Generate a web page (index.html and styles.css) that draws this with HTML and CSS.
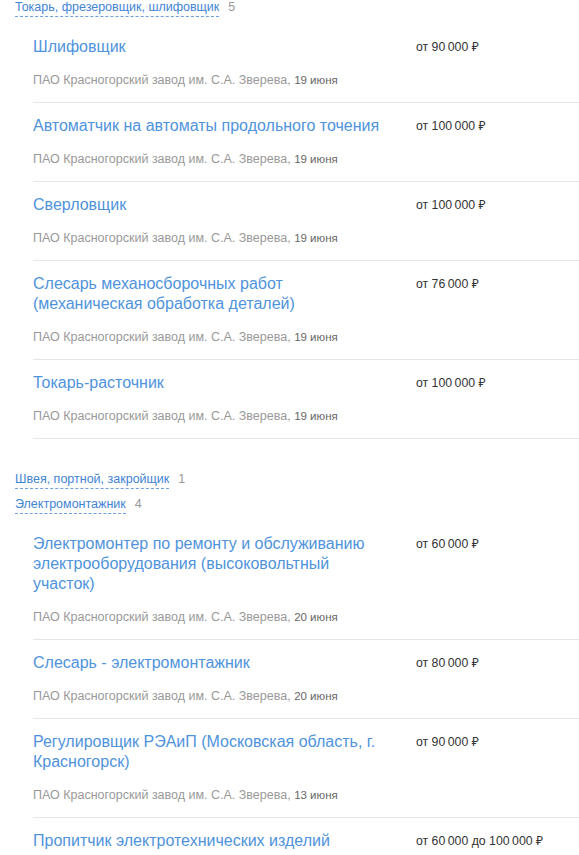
FILE: index.html
```html
<!DOCTYPE html>
<html lang="ru">
<head>
<meta charset="UTF-8">
<title>Вакансии</title>
<link rel="stylesheet" href="styles.css">
</head>
<body>
<div class="page">

  <div class="group">
    <div class="group-head"><span class="group-name">Токарь, фрезеровщик, шлифовщик</span><span class="group-count">5</span></div>
    <ul class="vacancies">
      <li class="vacancy">
        <a class="vacancy-title" href="#">Шлифовщик</a>
        <div class="salary">от 90&#8239;000 ₽</div>
        <div class="company">ПАО Красногорский завод им. С.А. Зверева, <span class="date">19 июня</span></div>
      </li>
      <li class="vacancy">
        <a class="vacancy-title" href="#">Автоматчик на автоматы продольного точения</a>
        <div class="salary">от 100&#8239;000 ₽</div>
        <div class="company">ПАО Красногорский завод им. С.А. Зверева, <span class="date">19 июня</span></div>
      </li>
      <li class="vacancy">
        <a class="vacancy-title" href="#">Сверловщик</a>
        <div class="salary">от 100&#8239;000 ₽</div>
        <div class="company">ПАО Красногорский завод им. С.А. Зверева, <span class="date">19 июня</span></div>
      </li>
      <li class="vacancy">
        <a class="vacancy-title" href="#">Слесарь механосборочных работ (механическая&nbsp;обработка&nbsp;деталей)</a>
        <div class="salary">от 76&#8239;000 ₽</div>
        <div class="company">ПАО Красногорский завод им. С.А. Зверева, <span class="date">19 июня</span></div>
      </li>
      <li class="vacancy">
        <a class="vacancy-title" href="#">Токарь-расточник</a>
        <div class="salary">от 100&#8239;000 ₽</div>
        <div class="company">ПАО Красногорский завод им. С.А. Зверева, <span class="date">19 июня</span></div>
      </li>
    </ul>
  </div>

  <div class="group">
    <div class="group-head"><span class="group-name">Швея, портной, закройщик</span><span class="group-count">1</span></div>
  </div>

  <div class="group">
    <div class="group-head"><span class="group-name">Электромонтажник</span><span class="group-count">4</span></div>
    <ul class="vacancies">
      <li class="vacancy">
        <a class="vacancy-title" href="#">Электромонтер по ремонту и обслуживанию электрооборудования (высоковольтный участок)</a>
        <div class="salary">от 60&#8239;000 ₽</div>
        <div class="company">ПАО Красногорский завод им. С.А. Зверева, <span class="date">20 июня</span></div>
      </li>
      <li class="vacancy">
        <a class="vacancy-title" href="#">Слесарь - электромонтажник</a>
        <div class="salary">от 80&#8239;000 ₽</div>
        <div class="company">ПАО Красногорский завод им. С.А. Зверева, <span class="date">20 июня</span></div>
      </li>
      <li class="vacancy">
        <a class="vacancy-title" href="#">Регулировщик РЭАиП (Московская область, г. Красногорск)</a>
        <div class="salary">от 90&#8239;000 ₽</div>
        <div class="company">ПАО Красногорский завод им. С.А. Зверева, <span class="date">13 июня</span></div>
      </li>
      <li class="vacancy">
        <a class="vacancy-title" href="#">Пропитчик электротехнических изделий</a>
        <div class="salary">от 60&#8239;000 до 100&#8239;000 ₽</div>
        <div class="company">ПАО Красногорский завод им. С.А. Зверева, <span class="date">20 июня</span></div>
      </li>
    </ul>
  </div>

</div>
</body>
</html>
```

FILE: styles.css
```css
body {
  margin: 0;
  background: #fff;
  font-family: "Liberation Sans", Arial, "Noto Sans", sans-serif;
  color: #333;
}
.page {
  margin-top: -1px;
  padding-left: 15px;
}

/* заголовок группы */
.group-head {
  font-size: 12.5px;
  line-height: 16px;
  margin-bottom: 7px;
}
.group-name {
  display: inline-block;
  color: #4283d2;
  padding-bottom: 1px;
  border-bottom: 1px dashed #6f9fdc;
  cursor: pointer;
}
.group-count {
  color: #999;
  margin-left: 9px;
  vertical-align: top;
}

/* список вакансий */
.vacancies {
  list-style: none;
  margin: 2px 0 32px 0;
  padding: 0 0 0 18px;
}
.vacancy {
  display: grid;
  grid-template-columns: 355px 1fr;
  column-gap: 28px;
  padding: 13px 0 14px 0;
  border-bottom: 1px solid #e6e6e6;
}
.vacancy-title {
  font-size: 16px;
  line-height: 20px;
  color: #4f93dc;
  text-decoration: none;
}
.salary {
  font-size: 12.3px;
  line-height: 20px;
  color: #333;
}
.company {
  grid-column: 1 / 3;
  margin-top: 15px;
  font-size: 12.5px;
  line-height: 16px;
  color: #999;
}
.date {
  font-size: 11.5px;
  color: #666;
}
```
